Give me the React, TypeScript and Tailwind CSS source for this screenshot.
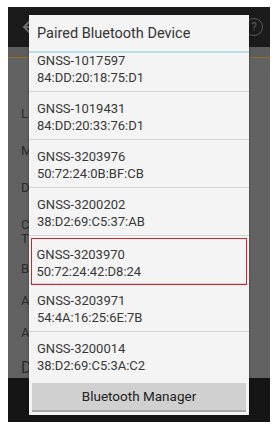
import React from 'react';

const DEVICES = [
  { name: 'GNSS-1017597', mac: '84:DD:20:18:75:D1' },
  { name: 'GNSS-1019431', mac: '84:DD:20:33:76:D1' },
  { name: 'GNSS-3203976', mac: '50:72:24:0B:BF:CB' },
  { name: 'GNSS-3200202', mac: '38:D2:69:C5:37:AB' },
  { name: 'GNSS-3203970', mac: '50:72:24:42:D8:24', selected: true },
  { name: 'GNSS-3203971', mac: '54:4A:16:25:6E:7B' },
  { name: 'GNSS-3200014', mac: '38:D2:69:C5:3A:C2' },
];

// letters of the settings page peeking out behind the dialog
const SIDE_LETTERS = [
  { t: 'L', cls: 'mt-[48px] leading-[16px]' },
  { t: 'M', cls: 'mt-[21px] leading-[16px]' },
  { t: 'D', cls: 'mt-[21px] leading-[16px]' },
  { t: 'C', cls: 'mt-[22px] leading-[13px]' },
  { t: 'T', cls: 'mt-[1px] leading-[13px]' },
  { t: 'B', cls: 'mt-[16px] leading-[16px]' },
  { t: 'A', cls: 'mt-[16px] leading-[16px]' },
  { t: 'A', cls: 'mt-[16px] leading-[16px]' },
];

const App: React.FC = () => {
  return (
    <div
      className="w-[277px] h-[429px] bg-white pl-[8px] pt-[7px] overflow-hidden"
      style={{ fontFamily: 'Roboto, "Noto Sans", sans-serif' }}
    >
      <div className="relative w-[262px] h-[415px] flex flex-col bg-[#161616]">
        {/* top bar */}
        <div className="h-[40px] shrink-0 bg-[#1b1b1b] flex items-center justify-between px-[8px]">
          <svg width="16" height="16" viewBox="0 0 16 16" className="ml-[4px]">
            <path d="M10 2 L4 8 L10 14" stroke="#6f6f6f" strokeWidth="2" fill="none" />
            <path d="M4 8 H15" stroke="#6f6f6f" strokeWidth="2" />
          </svg>
          <div className="w-[18px] h-[18px] rounded-full border-[1.5px] border-[#5a5a5a] flex items-center justify-center text-[12px] text-[#5a5a5a] mr-[-1px]">
            ?
          </div>
        </div>

        {/* dimmed page content */}
        <div className="h-[331px] shrink-0 bg-[#626262] flex flex-col">
          <div className="h-[32px] bg-[#5d5d5d] border-b border-[#9a6a2c]" />
          <div className="flex flex-col pl-[13px] text-[13px] text-[#2a2a2a]">
            {SIDE_LETTERS.map((l, i) => (
              <span key={i} className={l.cls}>{l.t}</span>
            ))}
            <span className="mt-[17px] text-[16px] leading-[20px]">D</span>
          </div>
        </div>

        <div className="flex-1 bg-[#151515]" />

        {/* dialog */}
        <div className="absolute left-[21px] top-[8px] w-[220px] h-[400px] bg-[#f4f4f4] flex flex-col shadow-[0_0_3px_rgba(0,0,0,0.3)]">
          <div className="h-[36px] shrink-0 flex items-center pl-[8px] text-[14.5px] text-[#333] pt-[2px]">
            Paired Bluetooth Device
          </div>
          <div className="h-[2px] shrink-0 bg-[#b9dde9]" />
          <div className="flex-1 overflow-hidden flex flex-col">
            {DEVICES.map((d, i) => (
              <div
                key={d.mac}
                className={`h-[48px] shrink-0 border-b border-[#d4d4d4] ${i === 0 ? 'mt-[-9px]' : ''}`}
              >
                <div
                  className={`h-full flex flex-col justify-center pt-[2px] text-[13px] leading-[17px] text-[#383838] ${
                    d.selected
                      ? 'mx-[2px] my-[2px] h-[44px] border-[1.5px] border-[#d3242b] pl-[4.5px]'
                      : 'pl-[8px]'
                  }`}
                >
                  <span>{d.name}</span>
                  <span>{d.mac}</span>
                </div>
              </div>
            ))}
          </div>
          <div className="h-[36px] shrink-0 px-[3px] pt-[4px] pb-[3px]">
            <div className="h-full bg-[#d0d0d0] border-b-2 border-[#a8a8a8] flex items-center justify-center text-[13.5px] text-[#222]">
              Bluetooth Manager
            </div>
          </div>
        </div>
      </div>
    </div>
  );
};

export default App;
